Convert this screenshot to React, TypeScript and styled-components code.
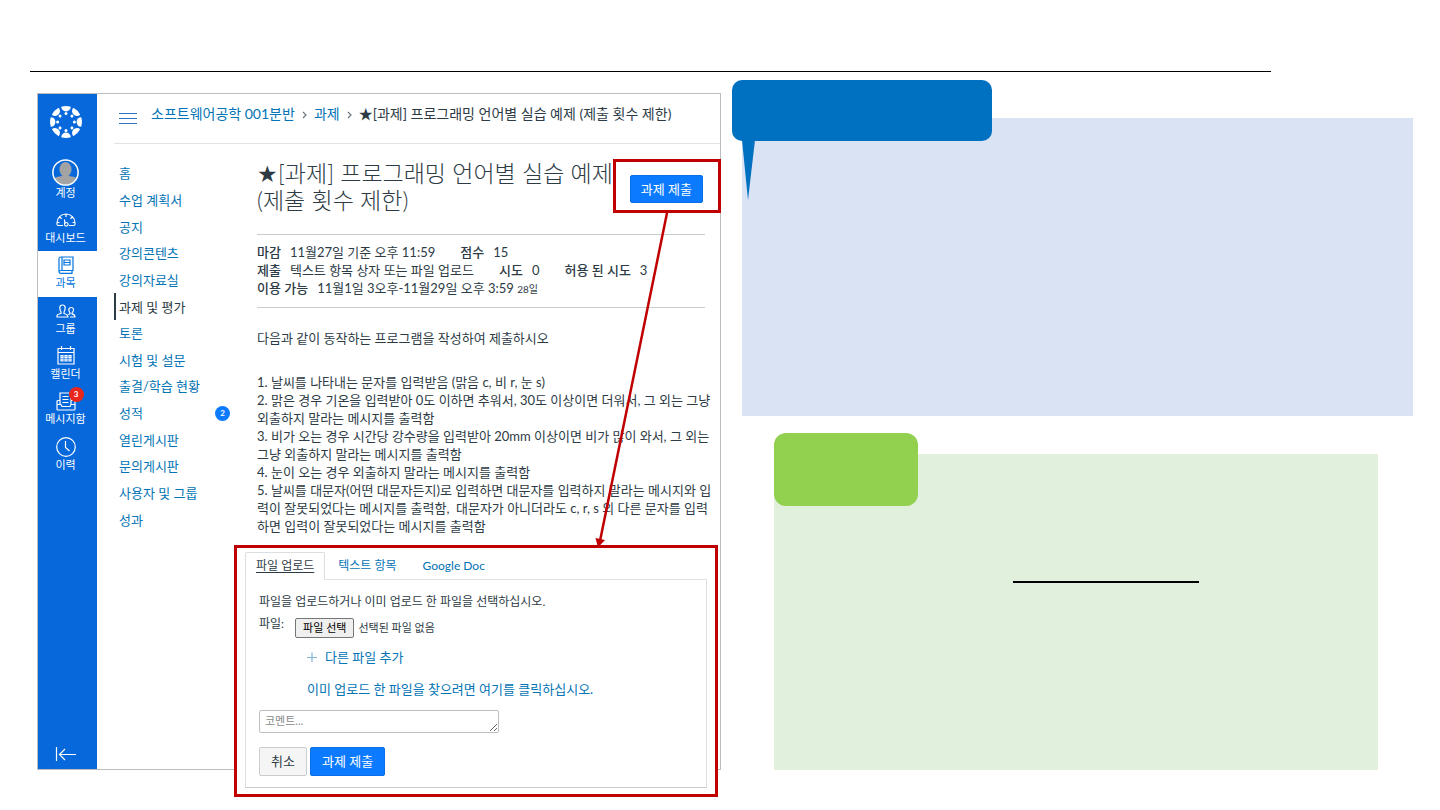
import React from "react";
import styled, { createGlobalStyle } from "styled-components";

const GlobalStyle = createGlobalStyle`
  *, *::before, *::after { box-sizing: border-box; }
  body {
    margin: 0;
    background: #fff;
    color: #2d3b45;
    font-family: Lato, "Noto Sans CJK KR", sans-serif;
    font-size: 13px;
    line-height: 18px;
  }
  a { color: #0374b5; text-decoration: none; }
  button, input, textarea { font: inherit; }
`;

const BLUE = "#0b7aff";
const RED = "#c00000";

const HeaderRule = styled.header`
  height: 72px;
  margin: 0 169px 0 30px;
  border-bottom: 1px solid #000;
`;

const Slide = styled.main`
  display: grid;
  grid-template-columns: 684fr 681fr;
  gap: 11px;
  align-items: start;
  padding: 8px 27px 40px 37px;
`;

const Lms = styled.section`
  position: relative;
  display: grid;
  grid-template-columns: 59px minmax(0, 1fr);
  margin-top: 13px;
  border: 1px solid #bdbdbd;
`;

const GlobalNav = styled.nav`
  display: flex;
  flex-direction: column;
  align-items: stretch;
  padding: 12px 0 8px;
  background: #0668da;
  color: #fff;
  font-size: 11px;
  line-height: 14px;
  text-align: center;
`;

const LogoLink = styled.a`
  display: flex;
  justify-content: center;
  height: 53px;
  padding-right: 4px;
`;

const AccountLink = styled.a`
  display: flex;
  flex-direction: column;
  align-items: center;
  gap: 0;
  height: 47px;
  padding-right: 4px;
  color: #fff;
`;

const NavList = styled.ul`
  display: flex;
  flex-direction: column;
  height: 272px;
  margin: 0;
  padding: 0;
  list-style: none;
`;

const NavItem = styled.li<{ $active?: boolean }>`
  flex: 1;
  background: ${(p) => (p.$active ? "#fff" : "transparent")};
  a {
    display: flex;
    flex-direction: column;
    align-items: center;
    padding: 3px 4px 0 0;
    color: ${(p) => (p.$active ? "#0374e0" : "#fff")};
  }
`;

const NavIcon = styled.span`
  position: relative;
  display: flex;
  align-items: center;
  justify-content: center;
  height: 22px;
`;

const Stroke = styled.svg`
  fill: none;
  stroke: currentColor;
  stroke-width: 1.2;
  overflow: visible;
`;

const Count = styled.span<{ $color: string }>`
  display: inline-flex;
  align-items: center;
  justify-content: center;
  width: 15px;
  height: 15px;
  border-radius: 50%;
  background: ${(p) => p.$color};
  color: #fff;
  font-size: 8px;
  font-weight: 700;
  line-height: 15px;
`;

const InboxCount = styled(Count)`
  position: absolute;
  top: -3px;
  right: -8px;
`;

const CollapseButton = styled.button`
  margin-top: auto;
  padding: 0 4px 0 0;
  border: 0;
  background: none;
  color: #fff;
  line-height: 0;
`;

const Page = styled.div`
  padding-left: 17px;
`;

const TopBar = styled.div`
  display: flex;
  align-items: center;
  gap: 14px;
  height: 50px;
  padding: 0 0 6px 5px;
  border-bottom: 1px solid #e3e3e3;
`;

const MenuButton = styled.button`
  padding: 5px 0 0;
  border: 0;
  background: none;
  color: #2f74c0;
  line-height: 0;
`;

const Crumbs = styled.nav`
  display: flex;
  align-items: center;
  gap: 5px;
  font-size: 14px;
  line-height: 20px;
  padding-bottom: 3px;
  white-space: nowrap;
`;

const Columns = styled.div`
  display: grid;
  grid-template-columns: 143px minmax(0, 1fr);
  padding: 16px 15px 0 0;
`;

const CourseMenu = styled.ul`
  display: flex;
  flex-direction: column;
  height: 373px;
  margin: 0;
  padding: 0 27px 0 0;
  list-style: none;
`;

const CourseItem = styled.li<{ $active?: boolean }>`
  flex: 1;
  display: flex;
  align-items: center;
  justify-content: space-between;
  padding-left: 3px;
  border-left: 2px solid ${(p) => (p.$active ? "#2d3b45" : "transparent")};
  a { color: ${(p) => (p.$active ? "#2d3b45" : "#0374b5")}; }
`;

const Assignment = styled.article`
  padding-bottom: 234px;
`;

const TitleRow = styled.div`
  display: flex;
  justify-content: space-between;
  align-items: flex-start;
  padding: 0 2px 20px 0;
`;

const Title = styled.h1`
  margin: 0;
  font-size: 23px;
  font-weight: 300;
  line-height: 27px;
  white-space: nowrap;
`;

const Star = styled.span`
  font-family: "DejaVu Sans", sans-serif;
  line-height: 1;
`;

const Highlighted = styled.div`
  position: relative;
  margin-top: 15px;
  &::after {
    content: "";
    position: absolute;
    inset: -16px -18px -10px -17px;
    border: 3px solid ${RED};
    pointer-events: none;
  }
`;

const Button = styled.button<{ $primary?: boolean; $tall?: boolean }>`
  height: ${(p) => (p.$tall ? "29px" : "28px")};
  padding: 0 ${(p) => (p.$tall ? "11px" : "10px")} 1px;
  border: 1px solid ${(p) => (p.$primary ? "#0a6fe8" : "#c7cdd1")};
  border-radius: 2px;
  background: ${(p) => (p.$primary ? BLUE : "#f5f5f5")};
  color: ${(p) => (p.$primary ? "#fff" : "#2d3b45")};
  line-height: 18px;
  white-space: nowrap;
`;

const Facts = styled.dl`
  margin: 0;
  padding: 8px 0 9px;
  border-top: 1px solid #c7cdd1;
  border-bottom: 1px solid #c7cdd1;
  white-space: nowrap;
`;

const FactLine = styled.div`
  display: flex;
  gap: 25px;
`;

const Fact = styled.div`
  display: flex;
  gap: 9px;
  dt { font-weight: 500; }
  dd { margin: 0; }
  small { font-size: 10px; }
`;

const Description = styled.div`
  padding-top: 21px;
  white-space: nowrap;
  p { margin: 0 0 26px; }
`;

const Connector = styled.svg`
  position: absolute;
  top: 119px;
  right: 50px;
`;

const Dialog = styled.form`
  position: absolute;
  top: 451px;
  left: 196px;
  right: 2px;
  padding: 4px 8px 6px 8px;
  border: 3px solid ${RED};
  background: #fff;
  font-size: 12px;
`;

const Tabs = styled.div`
  display: flex;
  height: 28px;
  margin-bottom: -1px;
`;

const Tab = styled.button<{ $active?: boolean }>`
  position: relative;
  padding: 0 ${(p) => (p.$active ? "10px" : "12px")} 1px;
  border: 1px solid ${(p) => (p.$active ? "#dcdfe1" : "transparent")};
  border-bottom: 0;
  border-radius: 2px 2px 0 0;
  background: ${(p) => (p.$active ? "#fff" : "none")};
  color: ${(p) => (p.$active ? "#2d3b45" : "#0374b5")};
  text-decoration: ${(p) => (p.$active ? "underline" : "none")};
  text-underline-offset: 2px;
  white-space: nowrap;
`;

const TabPanel = styled.div`
  padding: 13px 14px 11px 13px;
  border: 1px solid #dfe2e4;
  border-bottom-color: #c7cdd1;
  white-space: nowrap;
  p { margin: 0; }
`;

const FileRow = styled.div`
  display: flex;
  align-items: flex-start;
  gap: 11px;
  margin-top: 4px;
`;

const FilePicker = styled.div`
  display: flex;
  align-items: center;
  gap: 4px;
  margin-top: 3px;
  font-size: 11px;
  input {
    position: absolute;
    width: 1px;
    height: 1px;
    opacity: 0;
  }
  label {
    height: 20px;
    padding: 0 7px;
    border: 1px solid #767676;
    border-radius: 2px;
    background: #efefef;
    color: #000;
    line-height: 18px;
  }
`;

const FormLinks = styled.div`
  display: flex;
  flex-direction: column;
  gap: 14px;
  margin: 10px 0 12px 48px;
  font-size: 13px;
  a { display: flex; align-items: center; gap: 8px; }
`;

const Comment = styled.textarea`
  display: block;
  width: 240px;
  height: 23px;
  padding: 1px 5px;
  border: 1px solid #b9bfc3;
  border-radius: 2px;
  font-size: 11px;
  line-height: 18px;
  overflow: hidden;
  &::placeholder { color: #8a8a8a; }
`;

const Actions = styled.div`
  display: flex;
  gap: 3px;
  margin-top: 14px;
  font-size: 13px;
`;

const Notes = styled.div`
  display: flex;
  flex-direction: column;
  gap: 38px;
  padding: 38px 0 0 10px;
`;

const BlueNote = styled.section`
  position: relative;
  min-height: 298px;
  background: #dae3f3;
`;

const Bubble = styled.div`
  position: absolute;
  top: -38px;
  left: -10px;
  width: 260px;
  height: 61px;
  border-radius: 10px;
  background: #0070c0;
  svg { position: absolute; top: 60px; left: 10px; }
`;

const GreenNote = styled.section`
  position: relative;
  display: flex;
  min-height: 316px;
  margin: 0 35px 0 32px;
  padding: 127px 179px 0 239px;
  background: #e0f0dd;
`;

const Chip = styled.div`
  position: absolute;
  top: -21px;
  left: 0;
  width: 144px;
  height: 73px;
  border-radius: 12px;
  background: #92d050;
`;

const Underline = styled.hr`
  flex: 1;
  height: 2px;
  margin: 0;
  border: 0;
  background: #000;
`;

const Logo = () => (
  <svg width="32" height="32" viewBox="-16 -16 32 32" fill="#fff" aria-hidden="true">
    {[0, 45, 90, 135, 180, 225, 270, 315].map((a) => (
      <g key={a} transform={`rotate(${a})`}>
        <path d="M-4.800-15.200A16 16 0 0 1 4.800-15.200A4.800 4.600 0 0 1-4.800-15.200Z" />
        <circle cy="-8.400" r="1.500" />
      </g>
    ))}
  </svg>
);

const Avatar = () => (
  <svg width="27" height="27" viewBox="0 0 27 27" aria-hidden="true">
    <clipPath id="face"><circle cx="13.500" cy="13.500" r="12" /></clipPath>
    <g clipPath="url(#face)" fill="#a3a3a3">
      <ellipse cx="13.500" cy="10.500" rx="6" ry="7.400" />
      <path d="M1 27V20Q4 17.500 10 17H17Q23 17.500 26 20V27Z" />
    </g>
    <circle cx="13.500" cy="13.500" r="12.600" fill="none" stroke="#fff" strokeWidth="1.500" />
  </svg>
);

const Dashboard = () => (
  <Stroke width="20" height="14" viewBox="0 0 20 14">
    <path d="M7 12.500H2.200Q1 12.500 1 11V10A9 9 0 0 1 19 10V11Q19 12.500 17.800 12.500H13M10 1V4M3.500 3.800L5.600 5.800M16.500 3.800L14.400 5.800M1 9.500H3.500M19 9.500H16.500M8.500 6.500L9 11" />
    <circle cx="10.300" cy="11.300" r="1.800" />
  </Stroke>
);

const Book = () => (
  <Stroke width="16" height="18" viewBox="0 0 16 18">
    <path d="M3 1H15V14.500H3Q1 14.500 1 16V2.500Q1 1 3 1ZM1 16Q1 17.300 3 17.300H14V14.500M4 1V14M6 4H12V9H6ZM6 6.500H12" />
  </Stroke>
);

const Groups = () => (
  <Stroke width="20" height="14" viewBox="0 0 20 14">
    <path d="M12 13H1V11.500Q1 10.500 5 9.500V8Q3.800 6 3.800 4Q3.800 1 6.500 1T9.200 4Q9.200 6 8 8V9.500Q12 10.500 12 13ZM14 13H19Q19 10.500 16 9.800V9Q18 6.500 17.500 5Q17 3.500 15.200 3.500T12.800 5Q12.500 6.800 14 9V9.800L12.300 10.500" />
  </Stroke>
);

const Calendar = () => (
  <Stroke width="18" height="19" viewBox="0 0 18 19">
    <path d="M1 2.500H17V18H1ZM1 6.500H17M4.500 0V4M13.500 0V4M4 9.500H6V11.500H4ZM8 9.500H10V11.500H8ZM12 9.500H14V11.500H12ZM4 13H6V15H4ZM8 13H10V15H8ZM12 13H14V15H12Z" />
  </Stroke>
);

const Inbox = () => (
  <Stroke width="20" height="19" viewBox="0 0 20 19">
    <path d="M4 12V1H15V12M6.500 4.500H12.500M6.500 7.500H12.500M6.500 10.500H12.500M4 8.500H1.500L1 9.500V17Q1 18 2 18H18Q19 18 19 17V9.500L18.500 8.500H15M1 12.500H5L6 14.500H14L15 12.500H19" />
  </Stroke>
);

const Clock = () => (
  <Stroke width="20" height="20" viewBox="0 0 20 20">
    <circle cx="10" cy="10" r="9.300" />
    <path d="M9.500 4V10.500L13.500 14" />
  </Stroke>
);

const navItems = [
  { label: "대시보드", icon: <Dashboard /> },
  { label: "과목", icon: <Book />, active: true },
  { label: "그룹", icon: <Groups /> },
  { label: "캘린더", icon: <Calendar /> },
  { label: "메시지함", icon: <Inbox />, count: 3 },
  { label: "이력", icon: <Clock /> },
];

const courseItems: { label: string; active?: boolean; count?: number }[] = [
  { label: "홈" },
  { label: "수업 계획서" },
  { label: "공지" },
  { label: "강의콘텐츠" },
  { label: "강의자료실" },
  { label: "과제 및 평가", active: true },
  { label: "토론" },
  { label: "시험 및 설문" },
  { label: "출결/학습 현황" },
  { label: "성적", count: 2 },
  { label: "열린게시판" },
  { label: "문의게시판" },
  { label: "사용자 및 그룹" },
  { label: "성과" },
];

const requirements = [
  "1. 날씨를 나타내는 문자를 입력받음 (맑음 c, 비 r, 눈 s)",
  "2. 맑은 경우 기온을 입력받아 0도 이하면 추워서, 30도 이상이면 더워서, 그 외는 그냥",
  "외출하지 말라는 메시지를 출력함",
  "3. 비가 오는 경우 시간당 강수량을 입력받아 20mm 이상이면 비가 많이 와서, 그 외는",
  "그냥 외출하지 말라는 메시지를 출력함",
  "4. 눈이 오는 경우 외출하지 말라는 메시지를 출력함",
  "5. 날씨를 대문자(어떤 대문자든지)로 입력하면 대문자를 입력하지 말라는 메시지와 입",
  "력이 잘못되었다는 메시지를 출력함,\u00a0 대문자가 아니더라도 c, r, s 외 다른 문자를 입력",
  "하면 입력이 잘못되었다는 메시지를 출력함",
];

const Chevron = () => (
  <Stroke width="9" height="9" viewBox="0 0 9 9" aria-hidden="true">
    <path d="M3 2L6 5L3 8" stroke="#6b7780" />
  </Stroke>
);

export default function App() {
  return (
    <>
      <GlobalStyle />
      <HeaderRule />
      <Slide>
        <Lms>
          <GlobalNav>
            <LogoLink href="#" aria-label="Canvas"><Logo /></LogoLink>
            <AccountLink href="#"><Avatar />계정</AccountLink>
            <NavList>
              {navItems.map((item) => (
                <NavItem key={item.label} $active={item.active}>
                  <a href="#">
                    <NavIcon>
                      {item.icon}
                      {item.count && <InboxCount $color="#e8261c">{item.count}</InboxCount>}
                    </NavIcon>
                    {item.label}
                  </a>
                </NavItem>
              ))}
            </NavList>
            <CollapseButton type="button" aria-label="메뉴 접기">
              <Stroke width="20" height="14" viewBox="0 0 20 14">
                <path d="M.5 0V14M3.500 7.500H20M9 2L3.500 7.500L9 13" />
              </Stroke>
            </CollapseButton>
          </GlobalNav>
          <Page>
            <TopBar>
              <MenuButton type="button" aria-label="과목 메뉴">
                <Stroke width="18" height="13" viewBox="0 0 18 13">
                  <path d="M0 1.500H18M0 6.500H18M0 11.500H18" />
                </Stroke>
              </MenuButton>
              <Crumbs>
                <a href="#">소프트웨어공학 001분반</a>
                <Chevron />
                <a href="#">과제</a>
                <Chevron />
                <span>★[과제] 프로그래밍 언어별 실습 예제 (제출 횟수 제한)</span>
              </Crumbs>
            </TopBar>
            <Columns>
              <CourseMenu>
                {courseItems.map((item) => (
                  <CourseItem key={item.label} $active={item.active}>
                    <a href="#">{item.label}</a>
                    {item.count && <Count $color={BLUE}>{item.count}</Count>}
                  </CourseItem>
                ))}
              </CourseMenu>
              <Assignment>
                <TitleRow>
                  <Title><Star>★</Star>[과제] 프로그래밍 언어별 실습 예제<br />(제출 횟수 제한)</Title>
                  <Highlighted>
                    <Button type="button" $primary>과제 제출</Button>
                  </Highlighted>
                </TitleRow>
                <Facts>
                  <FactLine>
                    <Fact><dt>마감</dt><dd>11월27일 기준 오후 11:59</dd></Fact>
                    <Fact><dt>점수</dt><dd>15</dd></Fact>
                  </FactLine>
                  <FactLine>
                    <Fact><dt>제출</dt><dd>텍스트 항목 상자 또는 파일 업로드</dd></Fact>
                    <Fact><dt>시도</dt><dd>0</dd></Fact>
                    <Fact><dt>허용 된 시도</dt><dd>3</dd></Fact>
                  </FactLine>
                  <FactLine>
                    <Fact><dt>이용 가능</dt><dd>11월1일 3오후-11월29일 오후 3:59 <small>28일</small></dd></Fact>
                  </FactLine>
                </Facts>
                <Description>
                  <p>다음과 같이 동작하는 프로그램을 작성하여 제출하시오</p>
                  {requirements.map((line) => <div key={line}>{line}</div>)}
                </Description>
              </Assignment>
            </Columns>
          </Page>
          <Connector width="80" height="335" viewBox="0 0 80 335" aria-hidden="true">
            <path d="M77 0L10 328" stroke={RED} strokeWidth="2.500" fill="none" />
            <path d="M5.500 325L15 327L8 334.500Z" fill={RED} />
          </Connector>
          <Dialog>
            <Tabs role="tablist">
              <Tab type="button" role="tab" aria-selected="true" $active>파일 업로드</Tab>
              <Tab type="button" role="tab">텍스트 항목</Tab>
              <Tab type="button" role="tab">Google Doc</Tab>
            </Tabs>
            <TabPanel>
              <p>파일을 업로드하거나 이미 업로드 한 파일을 선택하십시오.</p>
              <FileRow>
                <span>파일:</span>
                <FilePicker>
                  <input id="upload" type="file" />
                  <label htmlFor="upload">파일 선택</label>
                  <span>선택된 파일 없음</span>
                </FilePicker>
              </FileRow>
              <FormLinks>
                <a href="#">
                  <Stroke width="10" height="10" viewBox="0 0 10 10" aria-hidden="true">
                    <path d="M0 5.500H10M5 0.500V10" stroke="#7fb5d6" />
                  </Stroke>
                  다른 파일 추가
                </a>
                <a href="#">이미 업로드 한 파일을 찾으려면 여기를 클릭하십시오.</a>
              </FormLinks>
              <Comment aria-label="코멘트" placeholder="코멘트..." />
              <Actions>
                <Button type="button" $tall>취소</Button>
                <Button type="button" $primary $tall>과제 제출</Button>
              </Actions>
            </TabPanel>
          </Dialog>
        </Lms>
        <Notes>
          <BlueNote>
            <Bubble>
              <svg width="14" height="60" viewBox="0 0 14 60" aria-hidden="true">
                <path d="M0 0H13L6 60Z" fill="#0070c0" />
              </svg>
            </Bubble>
          </BlueNote>
          <GreenNote>
            <Chip />
            <Underline />
          </GreenNote>
        </Notes>
      </Slide>
    </>
  );
}
